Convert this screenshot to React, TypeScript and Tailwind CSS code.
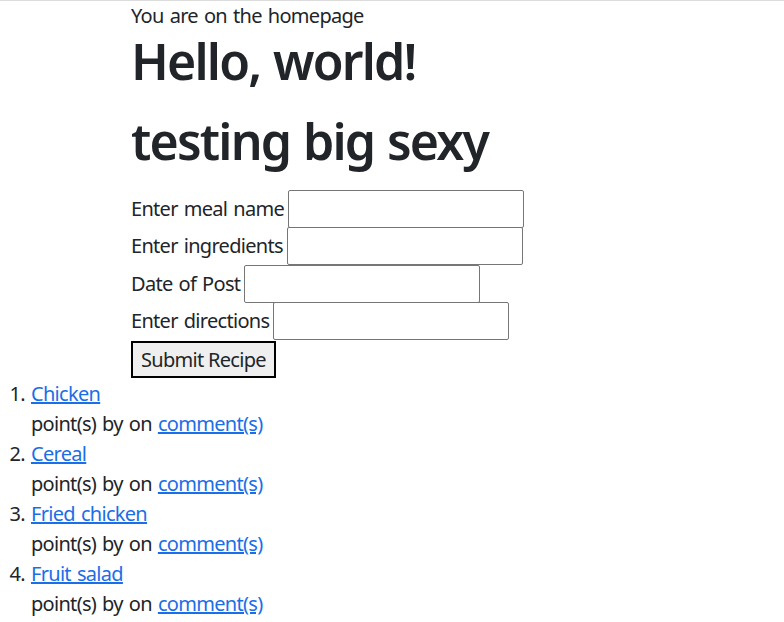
const font = { fontFamily: '"Noto Sans", "Open Sans", sans-serif' };

const recipes = ["Chicken", "Cereal", "Fried chicken", "Fruit salad"];

const fields = ["Enter meal name", "Enter ingredients", "Date of Post", "Enter directions"];

export default function App() {
  return (
    <div
      className="min-h-[622px] bg-white text-[20px] leading-[30px] tracking-[-0.7px] [word-spacing:1.5px] text-[#212529]"
      style={font}
    >
      <div className="border-t border-[#dcdcdc]" />
      <div className="pl-[131px]">
        <p>You are on the homepage</p>
        <h1 className="mb-[20px] text-[50px] font-semibold leading-[60px] tracking-[-1.8px]">
          Hello, world!
        </h1>
        <h1 className="mb-[19px] text-[50px] font-semibold leading-[60px] tracking-[-1.8px]">
          testing big sexy
        </h1>
        <form>
          {fields.map((f) => (
            <div key={f} className="flex h-[37.5px] items-center">
              <label>{f}</label>
              <input
                type="text"
                className="ml-[4px] h-[38px] w-[236px] rounded-[2px] border border-[#767676] bg-white"
              />
            </div>
          ))}
          <button
            type="button"
            className="mt-[1px] h-[37px] border-2 border-black bg-[#efefef] px-[8px] text-[20px] leading-[30px] tracking-[-0.7px] text-[#212529]"
          >
            Submit Recipe
          </button>
        </form>
      </div>
      <ol className="list-decimal pl-[31px] pt-[1px]">
        {recipes.map((r) => (
          <li key={r}>
            <a href="#" className="text-[#1a6ee8] underline">
              {r}
            </a>
            <div>
              point(s) by on{" "}
              <a href="#" className="text-[#1a6ee8] underline">
                comment(s)
              </a>
            </div>
          </li>
        ))}
      </ol>
    </div>
  );
}
